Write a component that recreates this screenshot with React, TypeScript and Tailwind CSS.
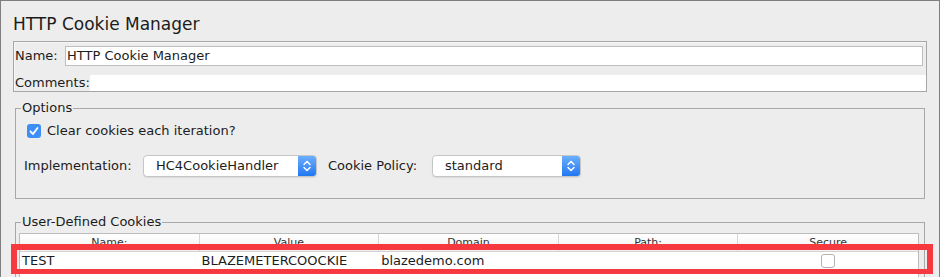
import React from 'react';

/**
 * macOS style pop-up select with the blue stepper on the right
 */
const Select: React.FC<{ value: string; width: string }> = ({ value, width }) => (
  <div
    className={`flex h-[22px] ${width} overflow-hidden rounded-[4px] border border-[#c6c6c6] bg-white shadow-[0_1px_1px_rgba(0,0,0,0.08)]`}
  >
    <span className="flex-1 pl-[12px] text-[13px] leading-[20px]">{value}</span>
    <span className="flex w-[18px] items-center justify-center bg-linear-to-b from-[#6aaefc] to-[#1f77f1]">
      <svg width="10" height="16" viewBox="0 0 10 16" fill="none">
        <path d="M2 6.5 L5 3.5 L8 6.5" stroke="white" strokeWidth="1.5" strokeLinecap="round" strokeLinejoin="round" />
        <path d="M2 9.5 L5 12.5 L8 9.5" stroke="white" strokeWidth="1.5" strokeLinecap="round" strokeLinejoin="round" />
      </svg>
    </span>
  </div>
);

const columns = ['Name:', 'Value', 'Domain', 'Path:', 'Secure'];

export default function App() {
  return (
    <div className="relative h-[277px] w-[940px] overflow-hidden border-l border-r border-t border-[#7f7f7f] bg-[#ededed] font-['DejaVu_Sans',sans-serif] text-[#1c1c1c]">
      {/* タイトル */}
      <div className="pl-[12px] pt-[13px] text-[17px] leading-[20px]">HTTP Cookie Manager</div>

      {/* Name / Comments */}
      <div className="ml-[12px] mt-[7px] w-[914px] border border-[#a6a6a6] shadow-[inset_1px_1px_0_#f7f7f7] text-[13px]">
        <div className="flex items-center pl-[1px] pr-[3px] pt-[4px]">
          <span className="w-[50px] leading-[16px]">Name:</span>
          <div className="h-[20px] flex-1 border border-[#bdbdbd] bg-white px-[1px] leading-[18px]">
            HTTP Cookie Manager
          </div>
        </div>
        <div className="mt-[9px] flex h-[16px]">
          <span className="w-[76px] pl-[1px] leading-[16px]">Comments:</span>
          <div className="flex-1 bg-white" />
        </div>
      </div>

      {/* Options */}
      <fieldset className="ml-[14px] mt-[8px] w-[910px] border border-[#a8a8a8] pb-[21px] text-[13px]">
        <legend className="ml-[5px] px-[1px] leading-[16px]">Options</legend>
        <div className="mt-[7px] flex h-[16px] items-center gap-[6px] pl-[11px]">
          <span className="flex h-[14px] w-[14px] items-center justify-center rounded-[3px] bg-[#3d8ef7]">
            <svg width="12" height="12" viewBox="0 0 12 12" fill="none">
              <path d="M2.5 6.5 L5 9 L9.5 3" stroke="white" strokeWidth="1.8" strokeLinecap="round" strokeLinejoin="round" />
            </svg>
          </span>
          <span className="leading-[16px]">Clear cookies each iteration?</span>
        </div>
        <div className="mt-[16px] flex h-[22px] items-center pl-[8px]">
          <span className="w-[119px]">Implementation:</span>
          <Select value="HC4CookieHandler" width="w-[174px]" />
          <span className="ml-[11px] w-[104px]">Cookie Policy:</span>
          <Select value="standard" width="w-[149px]" />
        </div>
      </fieldset>

      {/* User-Defined Cookies */}
      <fieldset className="ml-[14px] mt-[15px] h-[120px] w-[910px] border border-[#a8a8a8] text-[13px]">
        <legend className="ml-[5px] px-[1px] leading-[16px]">User-Defined Cookies</legend>
        <div className="ml-[3px] mt-[3px] h-[100px] w-[900px] border-l border-r border-t border-[#bcbcbc] bg-white">
          <div className="flex h-[18px] border-b border-[#d2d2d2] bg-linear-to-b from-[#ffffff] to-[#f1f1f1]">
            {columns.map((c, i) => (
              <div
                key={c}
                className={`w-[180px] pt-[1px] text-center text-[11px] leading-[16px] text-[#333] ${i < columns.length - 1 ? 'border-r border-[#d6d6d6]' : ''}`}
              >
                {c}
              </div>
            ))}
          </div>
          <div className="flex h-[18px] leading-[18px]">
            <div className="w-[180px] pl-[2px]">TEST</div>
            <div className="w-[180px] pl-[2px]">BLAZEMETERCOOCKIE</div>
            <div className="w-[180px] pl-[2px]">blazedemo.com</div>
            <div className="w-[180px] pl-[2px]" />
            <div className="flex w-[180px] items-center justify-center">
              <span className="h-[14px] w-[14px] rounded-[3px] border border-[#b3b3b3] bg-white" />
            </div>
          </div>
        </div>
      </fieldset>

      {/* 強調枠 */}
      <div className="absolute left-[10px] top-[243px] h-[30px] w-[922px] border-x-[6px] border-b-[5px] border-t-[6px] border-[#f6393e]" />
    </div>
  );
}
